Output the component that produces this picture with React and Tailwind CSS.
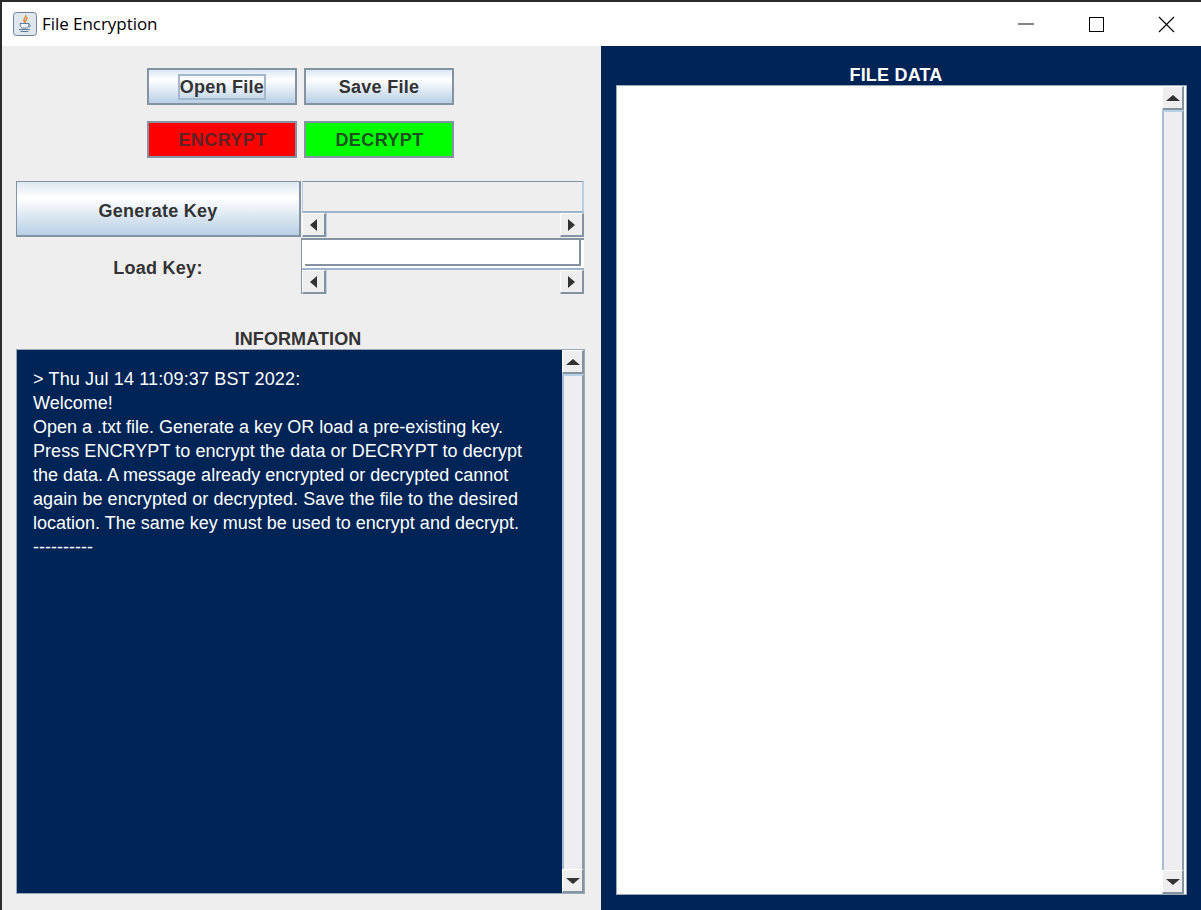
import { Minus, X } from "lucide-react";

const metal = "bg-gradient-to-b from-[#dde8f3] via-[#ffffff] via-30% to-[#b8cfe5]";

function JavaIcon() {
  return (
    <svg width="24" height="24" viewBox="0 0 24 24" className="shrink-0">
      <rect x="0.5" y="0.5" width="23" height="23" rx="3" fill="#dfe6ee" stroke="#6d7f92" />
      <path d="M12.5 3c1.5 2-2.5 3.500-1.500 6 .3.800 1 1.300 1 1.300-.3-1.800 3-3 1.800-5.300" fill="none" stroke="#e8862b" strokeWidth="1.400" />
      <path d="M7 11.500h9c0 2.500-1 4-2.500 4.500h-4C8 15.500 7 14 7 11.500z" fill="#f1f4f7" stroke="#5b7c9c" />
      <path d="M16 12.500c2 0 2 2.500-.5 2.500" fill="none" stroke="#5b7c9c" />
      <path d="M6 17.500h11M7.500 19.500h8" stroke="#5b7c9c" strokeWidth="1.200" />
    </svg>
  );
}

function MetalButton({ children, focused, className }) {
  return (
    <div className={`flex items-center justify-center border-[#8492a1] ${metal} text-lg font-bold tracking-[0.25px] text-[#333333] ${className}`}>
      <span className={focused ? "leading-[22px] outline-2 outline-[#a3b8cc]" : ""}>{children}</span>
    </div>
  );
}

function ColorButton({ children, color, text }) {
  return (
    <div className={`flex h-[37px] w-[150px] items-center justify-center border-2 border-[#8492a1] pl-px pt-px ${color} ${text} text-lg font-bold tracking-[0.4px]`}>
      {children}
    </div>
  );
}

function ArrowButton({ dir }) {
  const arrows = {
    left: "border-y-[6px] border-r-[7px] border-y-transparent border-r-[#333333]",
    right: "border-y-[6px] border-l-[7px] border-y-transparent border-l-[#333333]",
    up: "border-x-[7px] border-b-[6px] border-x-transparent border-b-[#333333]",
    down: "border-x-[7px] border-t-[6px] border-x-transparent border-t-[#333333]",
  };
  return (
    <div className="flex h-[24px] w-[24px] shrink-0 items-center justify-center border border-b-2 border-r-2 border-t-white border-l-white border-b-[#8492a1] border-r-[#8492a1] bg-[#eeeeee]">
      <div className={`h-0 w-0 ${arrows[dir]}`} />
    </div>
  );
}

function HScroll() {
  return (
    <div className="flex h-[24px] items-stretch bg-[#eeeeee]">
      <ArrowButton dir="left" />
      <div className="flex-1 border-l border-[#b8cfe5]" />
      <ArrowButton dir="right" />
    </div>
  );
}

function VScroll() {
  return (
    <div className="flex w-[22px] shrink-0 flex-col bg-[#eeeeee]">
      <div className="[&>div]:w-[22px]">
        <ArrowButton dir="up" />
      </div>
      <div className="flex-1 border-x-2 border-t-2 border-l-[#a9bdd2] border-r-[#8d99a6] border-t-[#b8cfe5] bg-[#eeeef2]" />
      <div className="[&>div]:w-[22px]">
        <ArrowButton dir="down" />
      </div>
    </div>
  );
}

export default function App() {
  return (
    <div className="flex h-[910px] w-[1201px] flex-col overflow-hidden bg-white font-['Liberation_Sans',Arial,sans-serif] text-[#333333]">
      <div className="h-[2px] shrink-0 bg-[#2b2b2b]" />

      {/* title bar */}
      <div className="flex h-[44px] shrink-0 items-center border-l-2 border-[#2b2b2b] pl-[11px]">
        <JavaIcon />
        <span className="ml-[5px] font-['Open_Sans',sans-serif] text-[17px] tracking-[-0.05px] text-black">File Encryption</span>
        <div className="ml-auto flex items-center text-black">
          <div className="flex w-[70px] justify-center"><Minus size={26} strokeWidth={0.9} /></div>
          <div className="flex w-[70px] justify-center"><div className="h-[15px] w-[15px] border border-black" /></div>
          <div className="flex w-[70px] justify-center"><X size={29} strokeWidth={0.9} /></div>
        </div>
      </div>

      <div className="flex min-h-0 flex-1">
        {/* left panel */}
        <div className="flex w-[601px] shrink-0 flex-col border-l-2 border-[#2b2b2b] bg-[#eeeeee] pb-[16px] pl-[14px] pr-[16px] pt-[22px]">
          <div className="flex flex-col items-center gap-[16px]">
            <div className="flex gap-[7px]">
              <MetalButton focused className="h-[37px] w-[150px] border-2 pt-px">Open File</MetalButton>
              <MetalButton className="h-[37px] w-[150px] border-2 pt-px">Save File</MetalButton>
            </div>
            <div className="flex gap-[7px]">
              <ColorButton color="bg-[#ff0000]" text="text-[#5c2226]">ENCRYPT</ColorButton>
              <ColorButton color="bg-[#00ff00]" text="text-[#1f4f22]">DECRYPT</ColorButton>
            </div>
          </div>

          <div className="mt-[23px] flex pr-px">
            <MetalButton className="h-[56px] w-[285px] border border-b-2 border-r-2 pt-[5px]">Generate Key</MetalButton>
            <div className="ml-px flex h-[56px] flex-1 flex-col">
              <div className="h-[32px] border border-b-2 border-r-2 border-t-[#8492a1] border-l-[#b8cfe5] border-b-[#9fb4c9] border-r-[#b8cfe5] bg-[#eeeeee]" />
              <HScroll />
            </div>
          </div>

          <div className="mt-px flex pr-px">
            <div className="flex h-[56px] w-[284px] items-center justify-center pt-[4px] text-lg font-bold tracking-[0.25px]">Load Key:</div>
            <div className="ml-px flex h-[56px] flex-1 flex-col border-l border-[#8492a1] bg-white">
              <div className="h-[32px] border-b-2 border-t-2 border-b-[#9fb4c9] border-t-[#8492a1] bg-white pb-[2px] pl-[3px] pr-[3px]">
                <div className="h-full border-b-2 border-r-2 border-[#8492a1]" />
              </div>
              <HScroll />
            </div>
          </div>

          <div className="mt-[35px] h-[20px] pr-[5px] text-center text-lg font-bold leading-[21px] tracking-[0.1px]">INFORMATION</div>

          <div className="flex min-h-0 flex-1 border border-[#9aa7b5]">
            <div className="min-w-0 flex-1 bg-[#002456] pl-[16px] pt-[17px] text-lg leading-6 text-white">
              <div className="tracking-[0.15px]">&gt; Thu Jul 14 11:09:37 BST 2022:</div>
              <div>Welcome!</div>
              <div>Open a .txt file. Generate a key OR load a pre-existing key.</div>
              <div className="tracking-[0.06px]">Press ENCRYPT to encrypt the data or DECRYPT to decrypt</div>
              <div>the data. A message already encrypted or decrypted cannot</div>
              <div className="tracking-[0.06px]">again be encrypted or decrypted. Save the file to the desired</div>
              <div>location. The same key must be used to encrypt and decrypt.</div>
              <div>----------</div>
            </div>
            <VScroll />
          </div>
        </div>

        {/* right panel */}
        <div className="flex flex-1 flex-col bg-[#002456] pb-[15px] pl-[15px] pr-[14px] pt-[18px]">
          <div className="h-[21px] pr-[11px] pt-px text-center text-lg font-bold leading-[21px] tracking-[0.2px] text-white">FILE DATA</div>
          <div className="flex min-h-0 flex-1 border border-[#9aa7b5] bg-white pr-[2px]">
            <div className="flex-1 bg-white" />
            <VScroll />
          </div>
        </div>
      </div>
    </div>
  );
}
